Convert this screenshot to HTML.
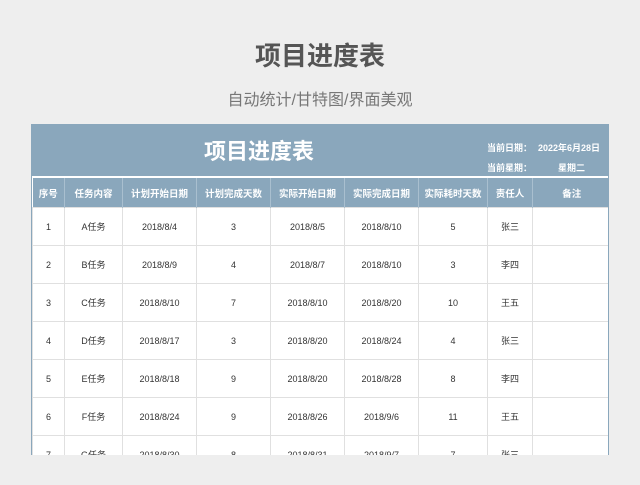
<!DOCTYPE html>
<html><head><meta charset="utf-8"><style>
body{margin:0;width:640px;height:485px;background:#eeeeee;font-family:"Liberation Sans","Noto Sans CJK SC",sans-serif;position:relative;overflow:hidden}
.t1{position:absolute;top:36px;left:0;width:640px;text-align:center;font-size:26px;font-weight:bold;color:#555}
.t2{position:absolute;top:86px;left:0;width:640px;text-align:center;font-size:16px;color:#777}
.box{position:absolute;left:31px;top:124px;width:578px;height:331px;overflow:hidden;background:#fff;border-left:1px solid #8aa7bc;border-right:1px solid #8aa7bc;box-sizing:border-box}
.band{position:absolute;left:0;top:0;width:578px;height:52px;background:#8aa7bc;color:#fff}
.band .tt{position:absolute;left:0;width:454px;text-align:center;top:10px;font-size:22px;font-weight:bold}
.band .d{position:absolute;font-size:9px;font-weight:bold}
table{position:absolute;top:52px;left:0;border-collapse:collapse;table-layout:fixed;width:578px}
th{background:#8aa7bc;color:#fff;font-size:9.5px;height:29px;border-left:1px solid #a9bfcf;border-top:2px solid #fff;padding:0;font-weight:bold}
td{height:37px;border:1px solid #e0e0e0;text-align:center;font-size:9px;color:#333;padding:0}
th:first-child{border-left:none}
</style></head><body>
<div class="t1">项目进度表</div>
<div class="t2">自动统计/甘特图/界面美观</div>
<div class="box">
<div class="band"><div class="tt">项目进度表</div>
<div class="d" style="left:455px;top:17px">当前日期：</div>
<div class="d" style="left:506px;top:17px">2022年6月28日</div>
<div class="d" style="left:455px;top:37px">当前星期：</div>
<div class="d" style="left:526px;top:37px">星期二</div></div>
<table>
<colgroup><col style="width:32px"><col style="width:58px"><col style="width:74px"><col style="width:74px"><col style="width:74px"><col style="width:74px"><col style="width:69px"><col style="width:45px"><col style="width:78px"></colgroup>
<tr><th>序号</th><th>任务内容</th><th>计划开始日期</th><th>计划完成天数</th><th>实际开始日期</th><th>实际完成日期</th><th>实际耗时天数</th><th>责任人</th><th>备注</th></tr>
<tr><td>1</td><td>A任务</td><td>2018/8/4</td><td>3</td><td>2018/8/5</td><td>2018/8/10</td><td>5</td><td>张三</td><td></td></tr>
<tr><td>2</td><td>B任务</td><td>2018/8/9</td><td>4</td><td>2018/8/7</td><td>2018/8/10</td><td>3</td><td>李四</td><td></td></tr>
<tr><td>3</td><td>C任务</td><td>2018/8/10</td><td>7</td><td>2018/8/10</td><td>2018/8/20</td><td>10</td><td>王五</td><td></td></tr>
<tr><td>4</td><td>D任务</td><td>2018/8/17</td><td>3</td><td>2018/8/20</td><td>2018/8/24</td><td>4</td><td>张三</td><td></td></tr>
<tr><td>5</td><td>E任务</td><td>2018/8/18</td><td>9</td><td>2018/8/20</td><td>2018/8/28</td><td>8</td><td>李四</td><td></td></tr>
<tr><td>6</td><td>F任务</td><td>2018/8/24</td><td>9</td><td>2018/8/26</td><td>2018/9/6</td><td>11</td><td>王五</td><td></td></tr>
<tr><td>7</td><td>G任务</td><td>2018/8/30</td><td>8</td><td>2018/8/31</td><td>2018/9/7</td><td>7</td><td>张三</td><td></td></tr>
</table></div>
</body></html>
